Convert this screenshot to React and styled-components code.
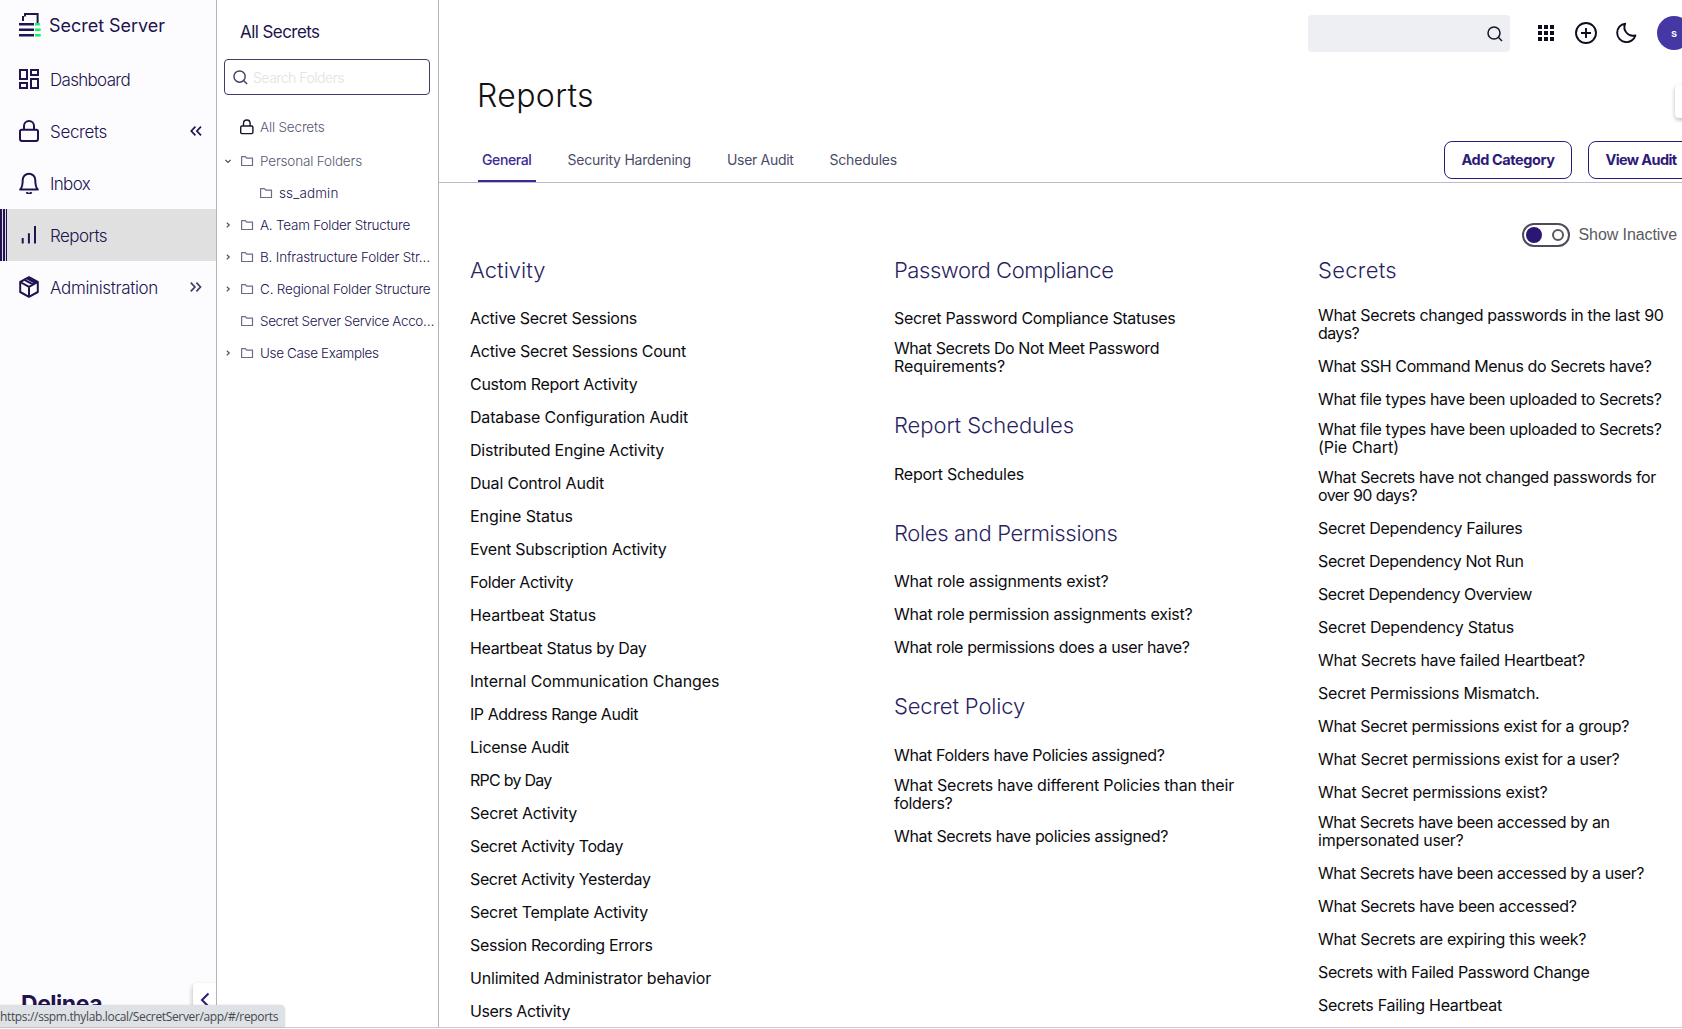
import React, { useLayoutEffect, useRef, useState } from "react";
import styled, { createGlobalStyle, css } from "styled-components";

const ink = "#22134f";
const violet = "#2d1a78";
const sans = `Inter, "Liberation Sans", sans-serif`;

const GlobalStyle = createGlobalStyle`
  * { box-sizing: border-box; }
  body { margin: 0; background: #fff; font-family: ${sans}; overflow: hidden; }
  ul { list-style: none; margin: 0; padding: 0; }
  h1, h2 { margin: 0; }
`;

/* ---------- text fitted to a given width by its tracking ---------- */

const Run = styled.span`
  display: inline-block;
  white-space: pre;
`;

function Fitted({ width, children }) {
  const ref = useRef(null);
  const [tracking, setTracking] = useState(0);
  useLayoutEffect(() => {
    const natural = ref.current.getBoundingClientRect().width;
    setTracking((width - natural) / children.length);
  }, [width, children]);
  return (
    <Run ref={ref} style={{ letterSpacing: `${tracking}px` }}>
      {children}
    </Run>
  );
}

/* ---------- frame ---------- */

const Page = styled.div`
  position: relative;
  height: 1029px;
  width: 100%;
  overflow: hidden;
  display: flex;
  flex-direction: column;
  padding-bottom: 1px;
`;

const Body = styled.div`
  flex: 1;
  min-height: 0;
  display: flex;
  border-bottom: 1px solid #cdcdcf;
`;

/* ---------- primary navigation ---------- */

const Nav = styled.nav`
  position: relative;
  flex: none;
  width: 217px;
  background: #fcfcff;
  border-right: 1px solid #b4b4b8;
  overflow: hidden;
`;

const Brand = styled.div`
  display: flex;
  align-items: center;
  gap: 8px;
  height: 53px;
  padding: 0 0 3px 19px;
  color: ${ink};
  font-size: 18px;
  font-weight: 430;
`;

const NavItem = styled.li`
  display: flex;
  align-items: center;
  gap: 11px;
  height: 52px;
  padding: 0 14px 0 19px;
  color: ${ink};
  font-size: 17px;
  font-weight: 350;
  ${(p) =>
    p.$active &&
    css`
      background:
        linear-gradient(90deg, ${ink} 0 2px, #dcdaec 2px 3px, ${ink} 3px 5px, #dcdaec 5px 6px, ${ink} 6px 7px, transparent 7px),
        #e0e0e0;
    `}
`;

const NavLabel = styled.span`
  flex: 1;
  padding-top: 1px;
`;

const NavGlyph = styled.svg`
  flex: none;
  display: block;
  width: 20px;
  height: 22px;
  fill: none;
  stroke: ${ink};
  stroke-width: 2;
`;

const Chevrons = styled.svg`
  flex: none;
  display: block;
  width: 12px;
  height: 12px;
  fill: none;
  stroke: ${(p) => p.$tone || ink};
  stroke-width: 1.7;
`;

const Company = styled.div`
  position: absolute;
  left: 21px;
  top: 990px;
  color: ${ink};
  font-size: 23px;
  font-weight: 700;
  line-height: 28px;
`;

const CollapseTab = styled.button`
  position: absolute;
  right: 0;
  top: 983px;
  width: 23px;
  height: 33px;
  padding: 0;
  border: 0;
  border-radius: 4px 0 0 4px;
  background: #fff;
  box-shadow: -1px 2px 4px rgba(0, 0, 0, 0.22);
  display: flex;
  align-items: center;
  justify-content: center;
`;

/* ---------- folder panel ---------- */

const Folders = styled.aside`
  flex: none;
  width: 222px;
  padding: 0 8px 0 7px;
  border-right: 1px solid #b4b4b8;
`;

const FoldersTitle = styled.h2`
  display: flex;
  align-items: center;
  height: 59px;
  padding: 4px 0 0 16px;
  color: ${ink};
  font-size: 17px;
  font-weight: 400;
`;

const FolderSearch = styled.div`
  display: flex;
  align-items: center;
  gap: 5px;
  height: 36px;
  padding-left: 8px;
  border: 1px solid #3f3d69;
  border-radius: 4px;
  color: #e2e2e4;
  font-size: 14px;
  font-weight: 350;
`;

const Tree = styled.ul`
  padding-top: 16px;
`;

const TreeRow = styled.li`
  display: flex;
  align-items: center;
  height: ${(p) => (p.$root ? 34 : 32)}px;
  padding-left: ${(p) => (p.$nested ? 19 : 0)}px;
  padding-bottom: ${(p) => (p.$root ? 2 : 0)}px;
  color: ${(p) => (p.$muted ? "#555872" : ink)};
  font-size: 13.5px;
  font-weight: 365;
  white-space: nowrap;
`;

const Twisty = styled.span`
  flex: none;
  display: flex;
  justify-content: center;
  width: 8px;
  margin-right: 8px;
`;

const TreeGlyph = styled.svg`
  flex: none;
  display: block;
  width: 14px;
  height: 16px;
  margin-right: 6px;
  fill: none;
  stroke: ${(p) => p.$tone || "#6b6d84"};
  stroke-width: 1.2;
`;

/* ---------- content ---------- */

const Content = styled.main`
  position: relative;
  flex: 1;
  min-width: 0;
  overflow: hidden;
`;

const TopBar = styled.header`
  display: flex;
  align-items: center;
  justify-content: flex-end;
  height: 66px;
  margin-right: -9px;
`;

const GlobalSearch = styled.div`
  display: flex;
  align-items: center;
  justify-content: flex-end;
  width: 202px;
  height: 37px;
  margin: 1px 24px 0 0;
  padding-right: 7px;
  border-radius: 4px;
  background: #eeeff2;
`;

const Actions = styled.div`
  display: flex;
  gap: 16px;
  margin-right: 19px;
`;

const ActionGlyph = styled.svg`
  display: block;
  width: 24px;
  height: 24px;
  fill: none;
  stroke: #0d0d22;
  stroke-width: 1.9;
`;

const SearchGlyph = styled.svg`
  flex: none;
  display: block;
  width: ${(p) => p.$size}px;
  height: ${(p) => p.$size}px;
  fill: none;
  stroke: ${(p) => p.$tone};
  stroke-width: 1.5;
`;

const Avatar = styled.div`
  display: flex;
  align-items: center;
  justify-content: center;
  width: 34px;
  height: 34px;
  border-radius: 50%;
  background: #4538a5;
  color: #fff;
  font-size: 11px;
  font-weight: 600;
`;

const Title = styled.h1`
  display: flex;
  align-items: center;
  height: 60px;
  padding: 0 0 2px 38px;
  color: #111;
  font-size: 32px;
  font-weight: 280;
`;

const TabBar = styled.div`
  display: flex;
  align-items: flex-end;
  justify-content: space-between;
  height: 57px;
  padding-left: 39px;
  border-bottom: 1px solid #b9bbc8;
`;

const Tabs = styled.div`
  display: flex;
  align-self: stretch;
  gap: 28px;
  padding-top: 12px;
`;

const Tab = styled.div`
  display: flex;
  align-items: center;
  padding: 0 4px;
  border-bottom: 2px solid ${(p) => (p.$active ? "#3a2a94" : "transparent")};
  color: ${(p) => (p.$active ? "#3a2a94" : "#4a4c66")};
  font-size: 14px;
  font-weight: ${(p) => (p.$active ? 450 : 400)};
`;

const Buttons = styled.div`
  display: flex;
  gap: 16px;
  margin: 0 -12px 3px 0;
`;

const Button = styled.button`
  height: 38px;
  padding: 0 16.5px 2px;
  border: 1px solid ${violet};
  border-radius: 8px;
  background: #fff;
  color: ${violet};
  font: 650 14.5px ${sans};
`;

const FilterRow = styled.div`
  display: flex;
  align-items: center;
  justify-content: flex-end;
  gap: 8px;
  height: 70.5px;
  padding: 32.5px 5px 0 0;
  color: #5a5a5e;
  font: 16px "Liberation Sans", Arial, sans-serif;
`;

const Switch = styled.span`
  display: flex;
  align-items: center;
  justify-content: space-between;
  width: 48px;
  height: 24px;
  padding: 0 4px 0 2px;
  border: 2px solid #504a5c;
  border-radius: 12px;
`;

const Knob = styled.span`
  width: 16px;
  height: 16px;
  border-radius: 50%;
  background: #2b1674;
`;

const OffMark = styled.span`
  width: 12px;
  height: 12px;
  border: 2px solid #5a5a5e;
  border-radius: 50%;
`;

const Columns = styled.div`
  display: grid;
  grid-template-columns: repeat(3, 424px);
  padding-left: 31px;
`;

const Column = styled.div`
  display: flex;
  flex-direction: column;
  gap: 26.5px;
`;

const GroupTitle = styled.h2`
  display: flex;
  align-items: center;
  height: 32px;
  margin-bottom: 16px;
  color: #2a1f62;
  font-size: 22px;
  font-weight: 270;
`;

const Report = styled.li`
  display: flex;
  flex-direction: column;
  padding: ${(p) => (p.$wrapped ? "4.5px 0 7.5px" : "7.5px 0")};
  color: #0c0c10;
  font-size: 16px;
  font-weight: 370;
  line-height: 18px;
`;

const SideFlap = styled.div`
  position: absolute;
  right: -8px;
  top: 85px;
  width: 15px;
  height: 33px;
  border-radius: 4px;
  background: #fff;
  box-shadow: 0 2px 4px rgba(0, 0, 0, 0.27);
`;

const StatusBar = styled.div`
  position: absolute;
  left: 0;
  top: 1005px;
  width: 285px;
  height: 22px;
  padding-top: 1px;
  border-radius: 0 5px 0 0;
  background: #dee1e6;
  box-shadow: 0 0 2px rgba(0, 0, 0, 0.15);
  color: #46484c;
  font: 12px/21px "Open Sans", "Noto Sans", sans-serif;
`;

/* ---------- drawings ---------- */

const Logo = () => (
  <svg width="22" height="24" viewBox="0 0 22 24" fill={ink}>
    <path d="M5 0h14.6v10h-2V2H7v1.5H5z M3 3h2v5H3z" />
    <path d="M0 10h15v2.4H0z M0 15.5h15V18H0z M0 21h15v2.6H0z" />
    <path fill="#0df65c" d="M16 10h4.8v2.4H16z M16 15.5h5.7V18H16z M16 21h5.7v2.6H16z" />
  </svg>
);

const navIcons = {
  dashboard: (
    <path d="M1 2h7v9H1z M12 2h7v5h-7z M1 15h7v5H1z M12 11h7v9h-7z" />
  ),
  lock: (
    <>
      <rect x="1" y="9.7" width="18" height="11.2" rx="1.8" />
      <path d="M5 9.5V6a5 5 0 0 1 10 0v3.5" />
    </>
  ),
  bell: (
    <>
      <path strokeLinejoin="round" d="M1.2 17.5h17.6C16.6 15.4 16.3 13.6 16.3 8a6.3 6.3 0 0 0-12.6 0C3.7 13.6 3.4 15.4 1.2 17.5z" />
      <path d="M7.6 20.2a2.6 2.6 0 0 0 4.8 0" />
    </>
  ),
  bars: <path d="M3.7 19.5v-5.6 M9.9 19.5V9.2 M16 19.5V2" />,
  box: (
    <path strokeLinejoin="round" d="M10 1.2 18.8 6v10L10 20.8 1.2 16V6z M1.2 6 10 10.9 18.8 6 M10 10.9v9.9 M5.5 3.8l8.8 4.8 M8 2.4l8.6 4.7" />
  ),
};

const NavIcon = ({ name }) => <NavGlyph viewBox="0 0 20 22">{navIcons[name]}</NavGlyph>;

const SearchIcon = ({ size, tone }) => (
  <SearchGlyph $size={size} $tone={tone} viewBox="0 0 16 16">
    <circle cx="7" cy="7" r="6" />
    <path d="m11.3 11.3 3.7 3.7" />
  </SearchGlyph>
);

const FolderIcon = () => (
  <TreeGlyph viewBox="0 0 14 16">
    <path strokeLinejoin="round" d="M1.6 3.6h3.8l1.3 1.5h5.8v7.4H1.6z" />
  </TreeGlyph>
);

const LockIcon = () => (
  <TreeGlyph viewBox="0 0 14 16" $tone="#15152a">
    <rect x=".7" y="7" width="12.2" height="7.6" rx="1.3" strokeWidth="1.4" />
    <path strokeWidth="1.4" d="M3.5 7V4.3a3.3 3.3 0 0 1 6.6 0V7" />
  </TreeGlyph>
);

const Chevron = ({ open }) => (
  <svg width="8" height="8" viewBox="0 0 8 8" fill="none" stroke="#4a4c66" strokeWidth="1.2">
    <path d={open ? "M1.4 2.8 4 5.4l2.6-2.6" : "M2.8 1.6 5.2 4 2.8 6.4"} />
  </svg>
);

/* ---------- data ---------- */

const navItems = [
  { icon: "dashboard", label: "Dashboard", width: 80 },
  { icon: "lock", label: "Secrets", width: 57, arrows: "in" },
  { icon: "bell", label: "Inbox", width: 40 },
  { icon: "bars", label: "Reports", width: 57, active: true },
  { icon: "box", label: "Administration", width: 108, arrows: "out" },
];

const folders = [
  { label: "Personal Folders", width: 102, twisty: "open", muted: true },
  { label: "ss_admin", width: 59.5, nested: true },
  { label: "A. Team Folder Structure", width: 150, twisty: "closed" },
  { label: "B. Infrastructure Folder Str…", width: 170, twisty: "closed" },
  { label: "C. Regional Folder Structure", width: 170.5, twisty: "closed" },
  { label: "Secret Server Service Acco…", width: 174 },
  { label: "Use Case Examples", width: 118.5, twisty: "closed" },
];

const tabs = [
  ["General", 49.5],
  ["Security Hardening", 123.5],
  ["User Audit", 66.5],
  ["Schedules", 67.5],
];

/* Every report is a list of its lines, each with the line's width. */
const columns = [
  [
    {
      title: ["Activity", 75.5],
      reports: [
        [["Active Secret Sessions", 167]],
        [["Active Secret Sessions Count", 216]],
        [["Custom Report Activity", 167.5]],
        [["Database Configuration Audit", 218]],
        [["Distributed Engine Activity", 194]],
        [["Dual Control Audit", 134]],
        [["Engine Status", 103]],
        [["Event Subscription Activity", 196.5]],
        [["Folder Activity", 103]],
        [["Heartbeat Status", 126]],
        [["Heartbeat Status by Day", 176.5]],
        [["Internal Communication Changes", 249.5]],
        [["IP Address Range Audit", 168]],
        [["License Audit", 99]],
        [["RPC by Day", 81.5]],
        [["Secret Activity", 107]],
        [["Secret Activity Today", 153]],
        [["Secret Activity Yesterday", 180.5]],
        [["Secret Template Activity", 178]],
        [["Session Recording Errors", 182.5]],
        [["Unlimited Administrator behavior", 241]],
        [["Users Activity", 100]],
      ],
    },
  ],
  [
    {
      title: ["Password Compliance", 219.5],
      reports: [
        [["Secret Password Compliance Statuses", 281.5]],
        [["What Secrets Do Not Meet Password", 265], ["Requirements?", 111]],
      ],
    },
    { title: ["Report Schedules", 180], reports: [[["Report Schedules", 130]]] },
    {
      title: ["Roles and Permissions", 223.5],
      reports: [
        [["What role assignments exist?", 214.5]],
        [["What role permission assignments exist?", 298.5]],
        [["What role permissions does a user have?", 295.5]],
      ],
    },
    {
      title: ["Secret Policy", 131],
      reports: [
        [["What Folders have Policies assigned?", 270.5]],
        [["What Secrets have different Policies than their", 340], ["folders?", 58.5]],
        [["What Secrets have policies assigned?", 274]],
      ],
    },
  ],
  [
    {
      title: ["Secrets", 79],
      reports: [
        [["What Secrets changed passwords in the last 90", 345.5], ["days?", 41]],
        [["What SSH Command Menus do Secrets have?", 333.5]],
        [["What file types have been uploaded to Secrets?", 343.5]],
        [["What file types have been uploaded to Secrets?", 343.5], ["(Pie Chart)", 81]],
        [["What Secrets have not changed passwords for", 338], ["over 90 days?", 99]],
        [["Secret Dependency Failures", 204.5]],
        [["Secret Dependency Not Run", 205.5]],
        [["Secret Dependency Overview", 214]],
        [["Secret Dependency Status", 196]],
        [["What Secrets have failed Heartbeat?", 267]],
        [["Secret Permissions Mismatch.", 221.5]],
        [["What Secret permissions exist for a group?", 311]],
        [["What Secret permissions exist for a user?", 301.5]],
        [["What Secret permissions exist?", 229.5]],
        [["What Secrets have been accessed by an", 291.5], ["impersonated user?", 145.5]],
        [["What Secrets have been accessed by a user?", 326]],
        [["What Secrets have been accessed?", 258.5]],
        [["What Secrets are expiring this week?", 268]],
        [["Secrets with Failed Password Change", 271.5]],
        [["Secrets Failing Heartbeat", 184]],
      ],
    },
  ],
];

/* ---------- sections ---------- */

const PrimaryNav = () => (
  <Nav>
    <Brand>
      <Logo />
      <Fitted width={116}>Secret Server</Fitted>
    </Brand>
    <ul>
      {navItems.map((item) => (
        <NavItem key={item.label} $active={item.active}>
          <NavIcon name={item.icon} />
          <NavLabel>
            <Fitted width={item.width}>{item.label}</Fitted>
          </NavLabel>
          {item.arrows && (
            <Chevrons viewBox="0 0 12 12" $tone={item.arrows === "out" ? "#3d3f5c" : ink}>
              <path d={item.arrows === "in" ? "M5.4 1.7 1.3 6l4.1 4.3 M11 1.7 6.9 6l4.1 4.3" : "M.8 1.7 4.9 6 .8 10.3 M6.4 1.7 10.5 6l-4.1 4.3"} />
            </Chevrons>
          )}
        </NavItem>
      ))}
    </ul>
    <Company>
      <Fitted width={81}>Delinea</Fitted>
    </Company>
    <CollapseTab>
      <svg width="10" height="16" viewBox="0 0 10 16" fill="none" stroke={violet} strokeWidth="2">
        <path d="M8.5 1.5 2 8l6.5 6.5" />
      </svg>
    </CollapseTab>
  </Nav>
);

const FolderPanel = () => (
  <Folders>
    <FoldersTitle>
      <Fitted width={79.5}>All Secrets</Fitted>
    </FoldersTitle>
    <FolderSearch>
      <SearchIcon size={15} tone="#3f4160" />
      <Fitted width={91}>Search Folders</Fitted>
    </FolderSearch>
    <Tree>
      <TreeRow $root $muted>
        <Twisty />
        <LockIcon />
        <Fitted width={64.5}>All Secrets</Fitted>
      </TreeRow>
      {folders.map((f) => (
        <TreeRow key={f.label} $nested={f.nested} $muted={f.muted}>
          <Twisty>{f.twisty && <Chevron open={f.twisty === "open"} />}</Twisty>
          <FolderIcon />
          <Fitted width={f.width}>{f.label}</Fitted>
        </TreeRow>
      ))}
    </Tree>
  </Folders>
);

const HeaderBar = () => (
  <TopBar>
    <GlobalSearch>
      <SearchIcon size={16} tone="#15152a" />
    </GlobalSearch>
    <Actions>
      <ActionGlyph viewBox="0 0 24 24">
        <path fill="#0d0d22" stroke="none" d="M4 4h4v4H4z M10 4h4v4h-4z M16 4h4v4h-4z M4 10h4v4H4z M10 10h4v4h-4z M16 10h4v4h-4z M4 16h4v4H4z M10 16h4v4h-4z M16 16h4v4h-4z" />
      </ActionGlyph>
      <ActionGlyph viewBox="0 0 24 24">
        <circle cx="12" cy="12" r="10" />
        <path d="M12 7v10 M7 12h10" />
      </ActionGlyph>
      <ActionGlyph viewBox="0 0 24 24">
        <path strokeLinejoin="round" d="M11.2 2.6A9.3 9.3 0 1 0 21.4 14.4 8.6 8.6 0 0 1 11.2 2.6z" />
      </ActionGlyph>
    </Actions>
    <Avatar>s</Avatar>
  </TopBar>
);

export default function App() {
  return (
    <Page>
      <GlobalStyle />
      <Body>
        <PrimaryNav />
        <FolderPanel />
        <Content>
          <HeaderBar />
          <Title>
            <Fitted width={117}>Reports</Fitted>
          </Title>
          <TabBar>
            <Tabs>
              {tabs.map(([label, width], i) => (
                <Tab key={label} $active={i === 0}>
                  <Fitted width={width}>{label}</Fitted>
                </Tab>
              ))}
            </Tabs>
            <Buttons>
              <Button>
                <Fitted width={93}>Add Category</Fitted>
              </Button>
              <Button>
                <Fitted width={71}>View Audit</Fitted>
              </Button>
            </Buttons>
          </TabBar>
          <FilterRow>
            <Switch>
              <Knob />
              <OffMark />
            </Switch>
            <Fitted width={98.5}>Show Inactive</Fitted>
          </FilterRow>
          <Columns>
            {columns.map((groups, i) => (
              <Column key={i}>
                {groups.map(({ title, reports }) => (
                  <section key={title[0]}>
                    <GroupTitle>
                      <Fitted width={title[1]}>{title[0]}</Fitted>
                    </GroupTitle>
                    <ul>
                      {reports.map((lines, n) => (
                        <Report key={n} $wrapped={lines.length > 1}>
                          {lines.map(([text, width]) => (
                            <span key={text}>
                              <Fitted width={width}>{text}</Fitted>
                            </span>
                          ))}
                        </Report>
                      ))}
                    </ul>
                  </section>
                ))}
              </Column>
            ))}
          </Columns>
          <SideFlap />
        </Content>
      </Body>
      <StatusBar>
        <Fitted width={278}>https://sspm.thylab.local/SecretServer/app/#/reports</Fitted>
      </StatusBar>
    </Page>
  );
}
